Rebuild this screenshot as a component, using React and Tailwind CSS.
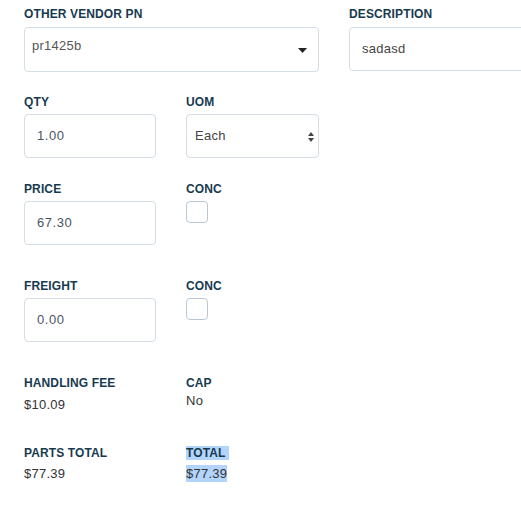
import React from "react";

const label = "block text-[12px] leading-[14px] font-bold uppercase tracking-[0.01em] text-[#173a50]";
const font = { fontFamily: '"Liberation Sans", Arial, sans-serif' };

function Caret() {
  return (
    <svg width="9" height="5" viewBox="0 0 9 5" className="absolute right-[11px] top-[20px]">
      <path d="M0 0 H9 L4.5 5 Z" fill="#222" />
    </svg>
  );
}

function UpDown() {
  return (
    <svg width="6" height="10" viewBox="0 0 6 10" className="absolute right-[4px] top-[17px]">
      <path d="M0 4 L3 0 L6 4 Z" fill="#444" />
      <path d="M0 6 L3 10 L6 6 Z" fill="#444" />
    </svg>
  );
}

function Input({ value }) {
  return (
    <div className="w-[132px] h-[44px] border border-[#d5dde7] rounded-[4px] bg-white flex items-center pl-[12px] text-[13px] tracking-[0.04em] text-[#4b5563]">
      {value}
    </div>
  );
}

function Check() {
  return <div className="w-[22px] h-[22px] mt-[5px] border border-[#b9c6d6] rounded-[4px] bg-white" />;
}

export default function App() {
  return (
    <div className="w-[521px] h-[514px] overflow-hidden bg-white relative" style={font}>
      <div className="pl-[24px] pt-[7px] w-[800px]">
        {/* Row 1 */}
        <div className="flex gap-[30px]">
          <div className="w-[295px]">
            <span className={label}>Other Vendor PN</span>
            <div className="mt-[6px] relative h-[45px] border border-[#d5dde7] rounded-[4px] bg-white pl-[7px] pt-[8px] text-[13px] text-[#555] tracking-[0.02em]">
              pr1425b
              <Caret />
            </div>
          </div>
          <div className="w-[295px]">
            <span className={label}>Description</span>
            <div className="mt-[6px] h-[44px] border border-[#d5dde7] rounded-[4px] bg-white flex items-center pl-[12px] text-[13px] text-[#444] tracking-[0.02em]">
              sadasd
            </div>
          </div>
        </div>

        {/* Row 2 */}
        <div className="flex gap-[30px] mt-[23px]">
          <div className="w-[132px]">
            <span className={label}>Qty</span>
            <div className="mt-[5px]"><Input value="1.00" /></div>
          </div>
          <div className="w-[133px]">
            <span className={label}>UOM</span>
            <div className="mt-[5px] relative h-[44px] border border-[#d5dde7] rounded-[4px] bg-white flex items-center pl-[8px] text-[13px] text-[#444] tracking-[0.02em]">
              Each
              <UpDown />
            </div>
          </div>
        </div>

        {/* Row 3 */}
        <div className="flex gap-[30px] mt-[24px]">
          <div className="w-[132px]">
            <span className={label}>Price</span>
            <div className="mt-[5px]"><Input value="67.30" /></div>
          </div>
          <div className="w-[133px]">
            <span className={label}>Conc</span>
            <Check />
          </div>
        </div>

        {/* Row 4 */}
        <div className="flex gap-[30px] mt-[34px]">
          <div className="w-[132px]">
            <span className={label}>Freight</span>
            <div className="mt-[5px]"><Input value="0.00" /></div>
          </div>
          <div className="w-[133px]">
            <span className={label}>Conc</span>
            <Check />
          </div>
        </div>

        {/* Row 5 */}
        <div className="flex gap-[30px] mt-[34px]">
          <div className="w-[132px]">
            <span className={label}>Handling Fee</span>
            <div className="mt-[7px] text-[13px] leading-[16px] text-[#333] tracking-[0.02em]">$10.09</div>
          </div>
          <div className="w-[133px]">
            <span className={label}>Cap</span>
            <div className="mt-[3px] text-[13px] leading-[16px] text-[#333] tracking-[0.02em]">No</div>
          </div>
        </div>

        {/* Row 6 */}
        <div className="flex gap-[30px] mt-[33px]">
          <div className="w-[132px]">
            <span className={label}>Parts Total</span>
            <div className="mt-[6px] text-[13px] leading-[16px] text-[#333] tracking-[0.02em]">$77.39</div>
          </div>
          <div className="w-[133px]">
            <span className={label}>
              <span className="bg-[#b3d4fc]">Total&nbsp;</span>
            </span>
            <div className="mt-[6px] text-[13px] leading-[16px] text-[#333] tracking-[0.02em]">
              <span className="bg-[#b3d4fc] py-[1px]">$77.39</span>
            </div>
          </div>
        </div>
      </div>
    </div>
  );
}
